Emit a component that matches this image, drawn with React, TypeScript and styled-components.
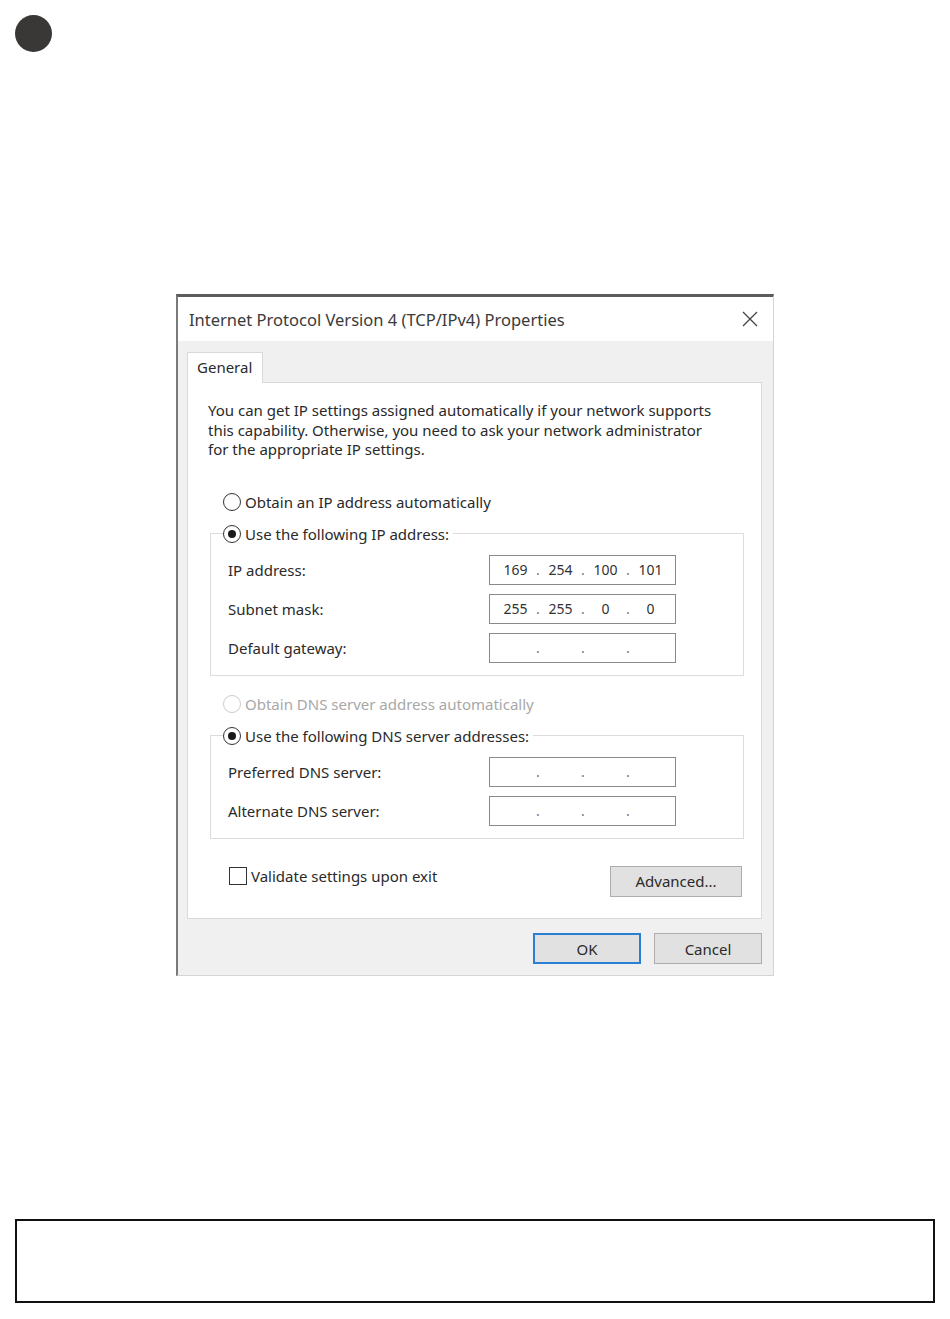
import React from "react";
import styled, { createGlobalStyle } from "styled-components";

const GlobalStyle = createGlobalStyle`
  html, body {
    margin: 0;
    padding: 0;
    background: #ffffff;
  }
  body {
    font-family: "Noto Sans", "Liberation Sans", sans-serif;
    color: #2a2a2a;
  }
`;

const Page = styled.div`
  width: 950px;
  height: 1319px;
  display: flex;
  flex-direction: column;
  align-items: flex-start;
`;

const StepDot = styled.div`
  width: 37px;
  height: 37px;
  border-radius: 50%;
  background: #3a3837;
  margin: 15px 0 0 15px;
`;

const Dialog = styled.div`
  margin: 242px 0 0 176px;
  width: 598px;
  height: 682px;
  box-sizing: border-box;
  border-top: 3px solid #5c5c5c;
  border-left: 2px solid #7a7a7a;
  border-right: 1px solid #d4d4d4;
  border-bottom: 1px solid #d4d4d4;
  display: flex;
  flex-direction: column;
  font-size: 15px;
`;

const TitleBar = styled.div`
  height: 45px;
  background: #ffffff;
  display: flex;
  align-items: center;
  justify-content: space-between;
  padding: 0 14px 0 11px;
  font-size: 16.5px;
  color: #3a3a3a;
`;

const CloseIcon = styled.svg`
  width: 18px;
  height: 18px;
`;

const Body = styled.div`
  flex: 1;
  background: #f0f0f0;
  padding: 11px 11px 11px 9px;
  display: flex;
  flex-direction: column;
`;

const TabStrip = styled.div`
  display: flex;
`;

const Tab = styled.div`
  width: 76px;
  height: 31px;
  box-sizing: border-box;
  background: #ffffff;
  border: 1px solid #d9d9d9;
  border-bottom: none;
  padding: 4px 0 0 9px;
  margin-bottom: -1px;
  position: relative;
  z-index: 1;
`;

const Panel = styled.div`
  height: 537px;
  box-sizing: border-box;
  background: #ffffff;
  border: 1px solid #d9d9d9;
  padding: 18px 18px 0 20px;
  display: flex;
  flex-direction: column;
`;

const Intro = styled.p`
  margin: 0 0 30px;
  line-height: 19.5px;
`;

const OptionRow = styled.label<{ $disabled?: boolean }>`
  display: flex;
  align-items: center;
  gap: 4px;
  height: 24px;
  margin-left: 15px;
  color: ${(p) => (p.$disabled ? "#a8a8a8" : "inherit")};
`;

const Radio = styled.span<{ $checked?: boolean; $disabled?: boolean }>`
  width: 18px;
  height: 18px;
  box-sizing: border-box;
  border-radius: 50%;
  border: 1px solid ${(p) => (p.$disabled ? "#cccccc" : "#333333")};
  display: flex;
  align-items: center;
  justify-content: center;
  background: #ffffff;

  &::after {
    content: "";
    width: 8px;
    height: 8px;
    border-radius: 50%;
    background: #1a1a1a;
    display: ${(p) => (p.$checked ? "block" : "none")};
  }
`;

const Group = styled.fieldset`
  margin: 8px 0 0 2px;
  width: 534px;
  box-sizing: border-box;
  border: 1px solid #dcdcdc;
  padding: 9px 0 12px 0;
  display: flex;
  flex-direction: column;
  gap: 9px;
`;

const Legend = styled.legend`
  padding: 0 4px 0 0;
  margin-left: 12px;

  ${OptionRow} {
    margin-left: 0;
  }
`;

const FieldRow = styled.div`
  display: flex;
  align-items: center;
  justify-content: space-between;
  width: 448px;
  margin-left: 17px;
`;

const IpBox = styled.div`
  width: 187px;
  height: 30px;
  box-sizing: border-box;
  border: 1px solid #8a8a8a;
  display: flex;
  align-items: center;
  padding-left: 7px;
  font-size: 14px;
  color: #333333;
`;

const Octet = styled.span`
  width: 37px;
  text-align: center;
`;

const Dot = styled.span`
  width: 8px;
  text-align: center;
  color: #777777;
`;

const CheckRow = styled.div`
  display: flex;
  align-items: center;
  justify-content: space-between;
  margin-top: 27px;
  width: 532px;
  margin-left: 2px;
`;

const CheckLabel = styled.label`
  display: flex;
  align-items: center;
  gap: 4px;
  margin: 0 0 10px 19px;
`;

const CheckBox = styled.span`
  width: 18px;
  height: 18px;
  box-sizing: border-box;
  border: 1px solid #333333;
  background: #ffffff;
`;

const Button = styled.button<{ $primary?: boolean; $width?: number }>`
  width: ${(p) => p.$width ?? 108}px;
  height: 31px;
  box-sizing: border-box;
  background: #e1e1e1;
  border: ${(p) => (p.$primary ? "2px solid #2a7fd4" : "1px solid #adadad")};
  font-family: inherit;
  font-size: 15px;
  color: #2a2a2a;
  padding: 0;
`;

const ButtonBar = styled.div`
  display: flex;
  justify-content: flex-end;
  gap: 13px;
  margin-top: 14px;
`;

const NoteBox = styled.div`
  margin: 243px 0 0 15px;
  width: 920px;
  height: 84px;
  box-sizing: border-box;
  border: 2px solid #111111;
`;

function IpField({ value }: { value?: string[] }) {
  const parts = value ?? ["", "", "", ""];
  return (
    <IpBox>
      <Octet>{parts[0]}</Octet>
      <Dot>.</Dot>
      <Octet>{parts[1]}</Octet>
      <Dot>.</Dot>
      <Octet>{parts[2]}</Octet>
      <Dot>.</Dot>
      <Octet>{parts[3]}</Octet>
    </IpBox>
  );
}

export default function App() {
  return (
    <>
      <GlobalStyle />
      <Page>
        <StepDot />
        <Dialog>
          <TitleBar>
            <span>Internet Protocol Version 4 (TCP/IPv4) Properties</span>
            <CloseIcon viewBox="0 0 18 18">
              <path d="M2 2 L16 16 M16 2 L2 16" stroke="#444" strokeWidth="1.3" fill="none" />
            </CloseIcon>
          </TitleBar>
          <Body>
            <TabStrip>
              <Tab>General</Tab>
            </TabStrip>
            <Panel>
              <Intro>
                You can get IP settings assigned automatically if your network supports
                <br />
                this capability. Otherwise, you need to ask your network administrator
                <br />
                for the appropriate IP settings.
              </Intro>
              <OptionRow>
                <Radio />
                Obtain an IP address automatically
              </OptionRow>
              <Group>
                <Legend>
                  <OptionRow>
                    <Radio $checked />
                    Use the following IP address:
                  </OptionRow>
                </Legend>
                <FieldRow>
                  <span>IP address:</span>
                  <IpField value={["169", "254", "100", "101"]} />
                </FieldRow>
                <FieldRow>
                  <span>Subnet mask:</span>
                  <IpField value={["255", "255", "0", "0"]} />
                </FieldRow>
                <FieldRow>
                  <span>Default gateway:</span>
                  <IpField />
                </FieldRow>
              </Group>
              <OptionRow $disabled style={{ marginTop: 16 }}>
                <Radio $disabled />
                Obtain DNS server address automatically
              </OptionRow>
              <Group>
                <Legend>
                  <OptionRow>
                    <Radio $checked />
                    Use the following DNS server addresses:
                  </OptionRow>
                </Legend>
                <FieldRow>
                  <span>Preferred DNS server:</span>
                  <IpField />
                </FieldRow>
                <FieldRow>
                  <span>Alternate DNS server:</span>
                  <IpField />
                </FieldRow>
              </Group>
              <CheckRow>
                <CheckLabel>
                  <CheckBox />
                  Validate settings upon exit
                </CheckLabel>
                <Button $width={132}>Advanced...</Button>
              </CheckRow>
            </Panel>
            <ButtonBar>
              <Button $primary>OK</Button>
              <Button>Cancel</Button>
            </ButtonBar>
          </Body>
        </Dialog>
        <NoteBox />
      </Page>
    </>
  );
}
